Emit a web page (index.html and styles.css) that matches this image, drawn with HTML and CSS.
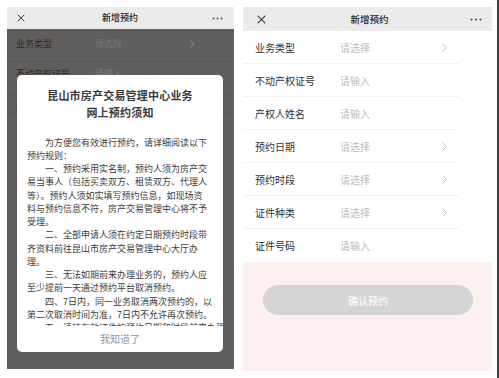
FILE: index.html
```html
<!DOCTYPE html>
<html lang="zh-CN">
<head>
<meta charset="utf-8">
<title>新增预约</title>
<link rel="stylesheet" href="styles.css">
</head>
<body>
<div class="page">
  <section class="phone phone-left">
    <header class="nav nav-left">
      <svg class="ico-x" width="8" height="8" viewBox="0 0 8 8"><path d="M0.6 0.6L7.4 7.4M7.4 0.6L0.6 7.4" stroke="#3a3a3a" stroke-width="1"/></svg>
      <span class="nav-title">新增预约</span>
      <svg class="ico-dots" width="11" height="3" viewBox="0 0 11 3"><circle cx="1.5" cy="1.5" r="1"/><circle cx="5.5" cy="1.5" r="1"/><circle cx="9.5" cy="1.5" r="1"/></svg>
    </header>
    <div class="screen dim">
      <div class="drow">
        <span class="dlabel">业务类型</span>
        <span class="dval">请选择</span>
        <svg class="chev" width="5" height="8" viewBox="0 0 5 8"><path d="M0.5 0.5L4.2 4L0.5 7.5" fill="none" stroke="#8b8a89" stroke-width="1"/></svg>
      </div>
      <div class="drow">
        <span class="dlabel">不动产权证号</span>
        <span class="dval">请输入</span>
      </div>
      <div class="drow">
        <span class="dlabel">产权人姓名</span>
        <span class="dval">请输入</span>
      </div>
      <div class="dialog">
        <h2 class="dlg-title">昆山市房产交易管理中心业务<br>网上预约须知</h2>
        <div class="dlg-body">
          <p>为方便您有效进行预约，请详细阅读以下<br>预约规则：</p>
          <p>一、预约采用实名制，预约人须为房产交<br>易当事人（包括买卖双方、租赁双方、代理人<br>等）。预约人须如实填写预约信息，如现场资<br>料与预约信息不符，房产交易管理中心将不予<br>受理。</p>
          <p>二、全部申请人须在约定日期预约时段带<br>齐资料前往昆山市房产交易管理中心大厅办<br>理。</p>
          <p>三、无法如期前来办理业务的，预约人应<br>至少提前一天通过预约平台取消预约。</p>
          <p>四、7日内，同一业务取消两次预约的，以<br>第二次取消时间为准，7日内不允许再次预约。</p>
          <p>五、请持有效证件按预约日期和时段前来办理。</p>
        </div>
        <div class="dlg-foot">我知道了</div>
      </div>
    </div>
  </section>

  <section class="phone phone-right">
    <header class="nav nav-right">
      <svg class="ico-x" width="9" height="9" viewBox="0 0 9 9"><path d="M0.6 0.6L8.4 8.4M8.4 0.6L0.6 8.4" stroke="#3a3a3a" stroke-width="1.1"/></svg>
      <span class="nav-title">新增预约</span>
      <svg class="ico-dots" width="12" height="3" viewBox="0 0 12 3"><circle cx="1.5" cy="1.5" r="1.1"/><circle cx="6" cy="1.5" r="1.1"/><circle cx="10.5" cy="1.5" r="1.1"/></svg>
    </header>
    <div class="form">
      <div class="row"><span class="label">业务类型</span><span class="val">请选择</span><svg class="chev" width="5" height="9" viewBox="0 0 5 9"><path d="M0.5 0.5L4.5 4.5L0.5 8.5" fill="none" stroke="#c4c4c4" stroke-width="1"/></svg></div>
      <div class="row"><span class="label">不动产权证号</span><span class="val">请输入</span></div>
      <div class="row"><span class="label">产权人姓名</span><span class="val">请输入</span></div>
      <div class="row"><span class="label">预约日期</span><span class="val">请选择</span><svg class="chev" width="5" height="9" viewBox="0 0 5 9"><path d="M0.5 0.5L4.5 4.5L0.5 8.5" fill="none" stroke="#c4c4c4" stroke-width="1"/></svg></div>
      <div class="row"><span class="label">预约时段</span><span class="val">请选择</span><svg class="chev" width="5" height="9" viewBox="0 0 5 9"><path d="M0.5 0.5L4.5 4.5L0.5 8.5" fill="none" stroke="#c4c4c4" stroke-width="1"/></svg></div>
      <div class="row"><span class="label">证件种类</span><span class="val">请选择</span><svg class="chev" width="5" height="9" viewBox="0 0 5 9"><path d="M0.5 0.5L4.5 4.5L0.5 8.5" fill="none" stroke="#c4c4c4" stroke-width="1"/></svg></div>
      <div class="row row-last"><span class="label">证件号码</span><span class="val">请输入</span></div>
    </div>
    <div class="footer">
      <button class="btn" type="button">确认预约</button>
    </div>
  </section>
</div>
</body>
</html>
```

FILE: styles.css
```css
* { box-sizing: border-box; }

html, body {
  margin: 0;
  padding: 0;
  background: #ffffff;
}

body {
  font-family: "Noto Sans CJK SC", "Noto Sans", sans-serif;
  color: #333333;
  width: 499px;
  height: 378px;
  overflow: hidden;
}

.page {
  width: 499px;
  height: 378px;
  display: flex;
  align-items: flex-start;
  gap: 9px;
  padding: 7px 0 0 7px;
  border-right: 2px solid #3c3c3c;
}

.phone {
  display: flex;
  flex-direction: column;
  flex: none;
}

.phone-left {
  width: 227px;
  height: 362px;
}

.phone-right {
  width: 249px;
  height: 364px;
}

/* nav bars */
.nav {
  flex: none;
  display: grid;
  grid-template-columns: 1fr auto 1fr;
  align-items: center;
  background: #ebebeb;
}

.nav .ico-x { justify-self: start; display: block; }
.nav .ico-dots { justify-self: end; display: block; fill: #555555; }

.nav-title {
  color: #222222;
  font-weight: 500;
}

.nav-left {
  height: 22px;
  padding: 0 11px 0 10px;
}
.nav-left .nav-title { font-size: 9px; line-height: 12px; }

.nav-right {
  height: 24px;
  padding: 0 10px 0 14px;
}
.nav-right .nav-title { font-size: 9.5px; line-height: 12px; }

/* dimmed left screen */
.screen {
  position: relative;
  flex: 1;
}

.dim {
  background: #5f5e5c;
}

.drow {
  height: 30px;
  display: flex;
  align-items: center;
  padding: 0 39px 0 9px;
  border-bottom: 1px solid #666463;
  font-size: 9px;
}

.dlabel {
  width: 79px;
  color: #2c2b2a;
}

.dval {
  color: #7a7877;
}

.drow .chev { margin-left: auto; display: block; }

.dialog {
  position: absolute;
  left: 10px;
  top: 46px;
  width: 206px;
  height: 277px;
  background: #ffffff;
  border-radius: 5px;
  display: flex;
  flex-direction: column;
  overflow: hidden;
}

.dlg-title {
  margin: 11.5px 0 0;
  font-size: 11px;
  line-height: 17px;
  font-weight: 700;
  color: #3a3a3a;
  text-align: center;
  letter-spacing: 0.2px;
}

.dlg-body {
  margin-top: 15px;
  height: 190px;
  overflow: hidden;
  padding: 0 10px;
  font-size: 9px;
  line-height: 13.25px;
  color: #3d3d3d;
}

.dlg-body p {
  margin: 0;
  text-indent: 2em;
  white-space: nowrap;
}

.dlg-foot {
  flex: 1;
  display: flex;
  align-items: center;
  justify-content: center;
  font-size: 10px;
  color: #7f98ba;
}

/* right form */
.form {
  flex: none;
  background: #ffffff;
}

.row {
  height: 33px;
  width: 216px;
  display: flex;
  align-items: center;
  padding: 0 12px;
  border-bottom: 1px solid #f1f1f1;
  font-size: 10px;
}

.row-last { border-bottom: none; }

.label {
  width: 85px;
  color: #2f2f2f;
}

.val {
  color: #bdbdbd;
}

.row .chev { margin-left: auto; display: block; }

.footer {
  flex: 1;
  background: #fdf0ef;
  padding: 23px 19px 0 20px;
}

.btn {
  display: block;
  width: 100%;
  height: 30px;
  border: none;
  border-radius: 15px;
  background: #d5d5d5;
  color: #ffffff;
  font-family: "Noto Sans CJK SC", "Noto Sans", sans-serif;
  font-size: 10px;
  padding: 0;
}
```
